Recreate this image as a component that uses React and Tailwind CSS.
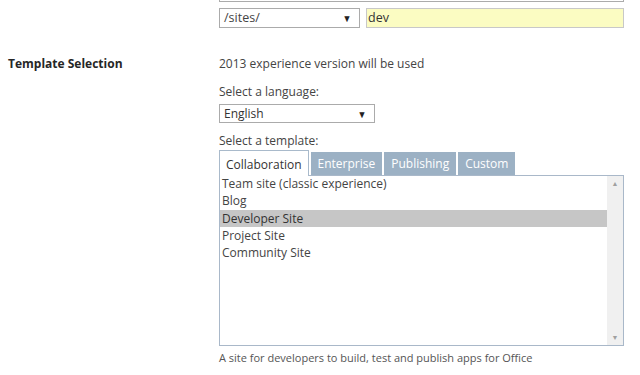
import { useState } from 'react'

const templates = [
  'Team site (classic experience)',
  'Blog',
  'Developer Site',
  'Project Site',
  'Community Site',
]

const tabs = ['Collaboration', 'Enterprise', 'Publishing', 'Custom']

function Caret() {
  return <span className="text-[10px] leading-none text-[#222] scale-x-90">▼</span>
}

export default function App() {
  const [activeTab, setActiveTab] = useState('Collaboration')
  const [selected, setSelected] = useState('Developer Site')

  return (
    <div className="w-[640px] h-[375px] overflow-hidden bg-white text-[12px] text-[#444] font-['Open_Sans',sans-serif]">
      {/* URL row (top of it is scrolled off) */}
      <div className="pl-[219px] flex flex-col">
        <div className="-mt-[20px] h-[22px] w-[405px] border border-[#ABABAB] bg-white" />
        <div className="mt-[6px] flex gap-[6px]">
          <div className="w-[141px] h-[20px] border border-[#ABABAB] flex items-center justify-between pl-[4px] pr-[7px]">
            <span className="text-[12.5px]">/sites/</span>
            <Caret />
          </div>
          <div className="w-[258px] h-[20px] border border-[#C8C8C8] bg-[#FBFCC2] flex items-center pl-[1px]">
            <span className="text-[12.5px] text-[#333]">dev</span>
          </div>
        </div>
      </div>

      <div className="mt-[27px] flex">
        <div className="w-[219px] pl-[8px] font-bold text-[#262626] leading-[18px]">Template Selection</div>
        <div className="flex flex-col">
          <div className="leading-[18px]">2013 experience version will be used</div>
          <div className="mt-[10px] leading-[18px]">Select a language:</div>
          <div className="mt-[3px] w-[156px] h-[19px] border border-[#ABABAB] flex items-center justify-between pl-[4px] pr-[7px]">
            <span className="text-[#333]">English</span>
            <Caret />
          </div>
          <div className="mt-[9px] leading-[18px]">Select a template:</div>

          <div className="flex items-end gap-[2px]">
            {tabs.map((t) =>
              t === activeTab ? (
                <button
                  key={t}
                  onClick={() => setActiveTab(t)}
                  className="h-[26px] px-[6px] pt-[2px] border border-b-0 border-[#A9BACB] bg-white text-[#333] leading-none -mb-px relative z-10"
                >
                  {t}
                </button>
              ) : (
                <button
                  key={t}
                  onClick={() => setActiveTab(t)}
                  className="h-[23px] px-[7px] bg-[#9CB1C4] text-white leading-none"
                >
                  {t}
                </button>
              )
            )}
          </div>

          <div className="w-[405px] h-[171px] border border-[#A9B8C9] flex">
            <div className="flex-1 flex flex-col -mt-[1px]">
              {templates.map((t) => (
                <div
                  key={t}
                  onClick={() => setSelected(t)}
                  className={
                    'h-[17.25px] leading-[17.25px] pl-[2px] ' +
                    (t === selected ? 'bg-[#C6C6C6] text-[#333]' : '')
                  }
                >
                  {t}
                </div>
              ))}
            </div>
            <div className="w-[16px] bg-[#F0F0F0] flex flex-col items-center justify-between py-[4px]">
              <span className="text-[7px] leading-none text-[#A0A0A0]">▲</span>
              <span className="text-[7px] leading-none text-[#A0A0A0]">▼</span>
            </div>
          </div>

          <div className="mt-[3px] leading-[18px] text-[11px] text-[#555]">
            A site for developers to build, test and publish apps for Office
          </div>
        </div>
      </div>
    </div>
  )
}
